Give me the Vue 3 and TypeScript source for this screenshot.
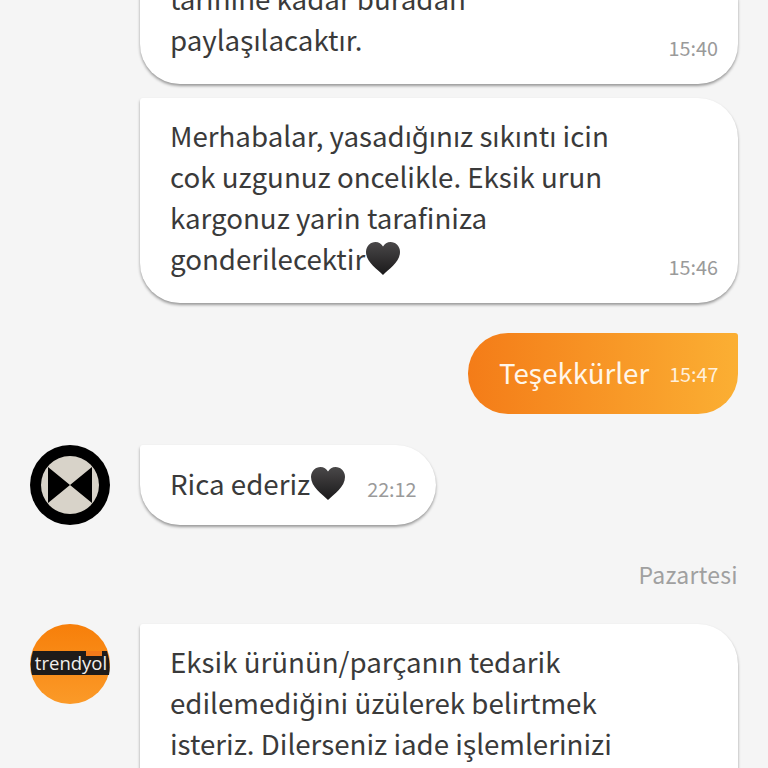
<script setup lang="ts">
interface Message {
  id: number
  lines: string[]
  time?: string
  heart?: boolean
}

const first: Message = { id: 1, lines: ['tarihine kadar buradan', 'paylaşılacaktır.'], time: '15:40' }
const second: Message = {
  id: 2,
  lines: ['Merhabalar, yasadığınız sıkıntı icin', 'cok uzgunuz oncelikle. Eksik urun', 'kargonuz yarin tarafiniza', 'gonderilecektir'],
  time: '15:46',
  heart: true,
}
const last: string[] = ['Eksik ürünün/parçanın tedarik', 'edilemediğini üzülerek belirtmek', 'isteriz. Dilerseniz iade işlemlerinizi']
</script>

<template>
  <div class="screen">
    <div class="list">
      <div class="row">
        <div class="bubble wide">
          <div v-for="line in first.lines" :key="line" class="line">{{ line }}</div>
          <span class="time">{{ first.time }}</span>
        </div>
      </div>

      <div class="row tight">
        <div class="bubble wide">
          <div v-for="line in second.lines" :key="line" class="line">
            {{ line }}<svg v-if="second.heart && line === second.lines[3]" class="heart" viewBox="0 0 36 36"><use href="#heart" /></svg>
          </div>
          <span class="time">{{ second.time }}</span>
        </div>
      </div>

      <div class="row mine">
        <div class="bubble own">
          <span class="own-text">Teşekkürler</span>
          <span class="own-time">15:47</span>
        </div>
      </div>

      <div class="row other">
        <svg class="avatar" viewBox="0 0 80 80">
          <circle cx="40" cy="40" r="40" fill="#000" />
          <circle cx="40" cy="40" r="29" fill="#d8d3c9" />
          <path d="M18 22 L40 40 L18 58 Z M62 22 L40 40 L62 58 Z" fill="#000" />
        </svg>
        <div class="bubble short">
          <span class="line">Rica ederiz</span>
          <svg class="heart" viewBox="0 0 36 36"><use href="#heart" /></svg>
          <span class="short-time">22:12</span>
        </div>
      </div>

      <div class="day">Pazartesi</div>

      <div class="row other last-row">
        <svg class="avatar" viewBox="0 0 80 80">
          <defs>
            <linearGradient id="tg" x1="0" y1="0" x2="0" y2="1">
              <stop offset="0" stop-color="#f77f0a" />
              <stop offset="1" stop-color="#fb9a28" />
            </linearGradient>
          </defs>
          <circle cx="40" cy="40" r="40" fill="url(#tg)" />
          <path d="M3 27 H77 Q81 39 79 51 H2 Q-1 39 3 27 Z" fill="#1f1c1a" />
          <rect x="56" y="27" width="16" height="5" fill="#f27a1a" />
          <text x="41" y="46" text-anchor="middle" class="logo">trendyol</text>
        </svg>
        <div class="bubble wide tall">
          <div v-for="line in last" :key="line" class="line">{{ line }}</div>
        </div>
      </div>
    </div>

    <svg width="0" height="0" class="defs">
      <defs>
        <linearGradient id="hg" x1="0" y1="0" x2="0" y2="1">
          <stop offset="0" stop-color="#4a4849" />
          <stop offset="1" stop-color="#1a191a" />
        </linearGradient>
        <symbol id="heart" viewBox="0 0 36 36">
          <path d="M18 34 C12 28 1 21 1 11 C1 5 5.500 1 10.500 1 C13.800 1 16.500 2.800 18 5.500 C19.500 2.800 22.200 1 25.500 1 C30.500 1 35 5 35 11 C35 21 24 28 18 34 Z" fill="url(#hg)" />
        </symbol>
      </defs>
    </svg>
  </div>
</template>

<style scoped>
.screen {
  width: 768px;
  height: 768px;
  overflow: hidden;
  background: #f5f5f5;
  font-family: "Noto Sans CJK KR", "Noto Sans", sans-serif;
  color: #3a3a3a;
}

.defs {
  position: absolute;
}

.list {
  display: flex;
  flex-direction: column;
  margin-top: -39px;
  padding: 0 30px;
}

.row {
  display: flex;
  padding-left: 110px;
}

.tight {
  margin-top: 14px;
}

.mine {
  justify-content: flex-end;
  margin-top: 30px;
}

.other {
  padding-left: 0;
  margin-top: 31px;
  gap: 30px;
  align-items: flex-start;
}

.last-row {
  margin-top: 34px;
}

.bubble {
  position: relative;
  background: #fff;
  border-radius: 3px 40px 40px 40px;
  box-shadow: 0 2px 3px rgba(0, 0, 0, 0.38);
}

.wide {
  width: 598px;
  padding: 17px 30px 24px;
  box-sizing: border-box;
}

/* runs on past the bottom of the screen */
.tall {
  min-height: 240px;
}

.line {
  font-size: 27.7px;
  line-height: 41px;
  white-space: nowrap;
}

.time {
  position: absolute;
  right: 20px;
  bottom: 21px;
  font-size: 19.8px;
  line-height: 30px;
  color: #9a9a9a;
}

.heart {
  width: 36px;
  height: 36px;
  vertical-align: -7px;
}

.own {
  display: flex;
  align-items: center;
  width: 270px;
  height: 81px;
  padding-left: 31px;
  box-sizing: border-box;
  border-radius: 40px 3px 40px 40px;
  background: linear-gradient(90deg, #f47c18, #fbaf33);
  box-shadow: none;
}

.own-text {
  margin-top: -3px;
  font-size: 27.7px;
  color: #fff6ea;
}

.own-time {
  margin-left: 20px;
  font-size: 19.8px;
  color: #fff0dc;
}

.avatar {
  width: 80px;
  height: 80px;
  flex: none;
}

.logo {
  font-family: "Open Sans", sans-serif;
  font-size: 18.5px;
  fill: #f1efec;
}

.short {
  display: flex;
  align-items: center;
  width: 296px;
  height: 80px;
  padding: 0 0 3px 30px;
  box-sizing: border-box;
}

.short-time {
  margin-left: 21px;
  margin-top: 9px;
  font-size: 19.8px;
  color: #9a9a9a;
}

.day {
  margin-top: 33px;
  text-align: right;
  font-size: 23px;
  line-height: 32px;
  color: #a0a0a0;
  letter-spacing: 0.3px;
}
</style>
